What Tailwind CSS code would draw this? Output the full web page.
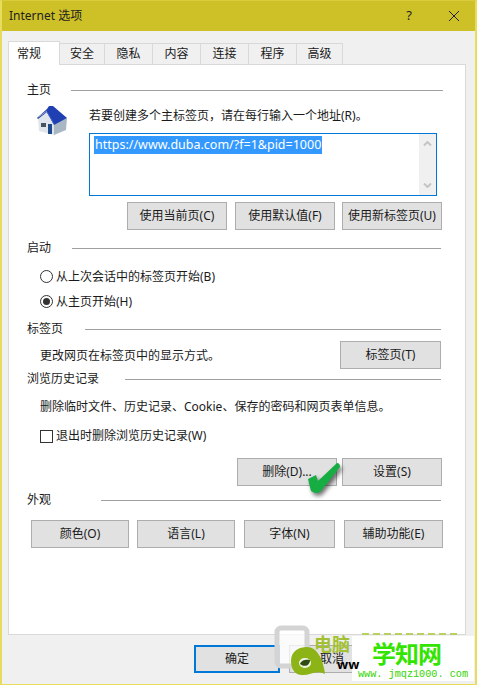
<!DOCTYPE html>
<html lang="zh">
<head>
<meta charset="utf-8">
<script src="https://cdn.jsdelivr.net/npm/@tailwindcss/browser@4"></script>
</head>
<body class="m-0">
<div class="relative w-[477px] h-[685px] overflow-hidden bg-[#f0f0f0] border-x-2 border-b border-[#e8dc5c] border-t border-t-[#d8cc3c] font-['Noto_Sans','Noto_Sans_CJK_SC',sans-serif] text-[12px] text-[#1a1a1a] flex flex-col">
  <div class="h-[30px] shrink-0 bg-[#cdc127] flex items-center pl-[7px] text-[12px] text-[#222]">
    <span class="flex-1">Internet 选项</span>
    <span class="w-[78px] text-center text-[13px]">?</span>
    <svg class="w-[12px] h-[12px] mr-[15px]" viewBox="0 0 12 12"><path d="M1 1L11 11M11 1L1 11" stroke="#222" stroke-width="1" fill="none"/></svg>
  </div>
  <div class="pl-[6px] pt-[9px] flex items-end h-[34px] shrink-0 relative z-10">
    <div class="w-[52px] h-[24px] bg-white border border-b-0 border-[#d9d9d9] flex items-center pl-[8px]">常规</div>
    <div class="w-[45px] h-[22px] border-y border-r border-[#d9d9d9] flex items-center justify-center">安全</div>
    <div class="w-[48px] h-[22px] border-y border-r border-[#d9d9d9] flex items-center justify-center">隐私</div>
    <div class="w-[48px] h-[22px] border-y border-r border-[#d9d9d9] flex items-center justify-center">内容</div>
    <div class="w-[48px] h-[22px] border-y border-r border-[#d9d9d9] flex items-center justify-center">连接</div>
    <div class="w-[48px] h-[22px] border-y border-r border-[#d9d9d9] flex items-center justify-center">程序</div>
    <div class="w-[46px] h-[22px] border-y border-r border-[#d9d9d9] flex items-center justify-center">高级</div>
  </div>
  <div class="ml-[6px] w-[458px] h-[571px] shrink-0 -mt-px bg-white border border-[#d9d9d9] pl-[18px] pr-[24px]">
    <div class="mt-[15px] h-[20px] flex items-center gap-[20px]"><span>主页</span><div class="flex-1 h-px bg-[#a0a0a0] mr-[-2px]"></div></div>
    <div class="flex h-[130px]">
      <div class="w-[62px] shrink-0 pl-[3px] pt-[1px]">
        <svg class="w-[45px] h-[40px]" viewBox="0 0 45 40">
          <path d="M8 17L17 10L24 22V34L9 30Z" fill="#dfe5ea"/>
          <path d="M24 23L37 17L36 29L24 34Z" fill="#a9b7c4"/>
          <path d="M7 17L17 8L19 5L23 5L37 17L24 24L17 11L8 18Z" fill="#1f3fb3"/>
          <path d="M17 11L24 23" stroke="#3f63d0" stroke-width="1" fill="none"/>
          <path d="M7 17L17 10" stroke="#8fa2b5" stroke-width="1" fill="none"/>
          <path d="M11 22H16V26H11Z" fill="#46525e"/>
          <path d="M18 23H22V33H18Z" fill="#1d4a8a"/>
        </svg>
      </div>
      <div class="flex flex-col">
        <div class="h-[20px] mt-[6px] flex items-center">若要创建多个主标签页，请在每行输入一个地址(R)。</div>
        <div class="mt-[7px] w-[348px] h-[63px] border border-[#0078d7] pl-[4px] pt-[2px] flex justify-between relative">
          <span class="h-[18px] bg-[#3399ff] text-white text-[12.5px] leading-[18px] px-px">https://www.duba.com/?f=1&amp;pid=1000</span>
          <div class="w-[17px] h-[61px] -mt-[2px] bg-[#f0f0f0] flex flex-col justify-between items-center py-[7px]">
            <svg class="w-[9px] h-[5px]" viewBox="0 0 9 5"><path d="M1 4.5L4.5 1L8 4.5" stroke="#c4c4c4" stroke-width="2" fill="none"/></svg>
            <svg class="w-[9px] h-[5px]" viewBox="0 0 9 5"><path d="M1 .5L4.5 4L8 .5" stroke="#c4c4c4" stroke-width="2" fill="none"/></svg>
          </div>
        </div>
        <div class="mt-[6px] flex h-[28px] pl-[38px]">
          <button class="w-[100px] h-[28px] shrink-0 bg-[#e1e1e1] border border-[#adadad]">使用当前页(C)</button>
          <button class="ml-[8px] w-[100px] h-[28px] shrink-0 bg-[#e1e1e1] border border-[#adadad]">使用默认值(F)</button>
          <button class="ml-[7px] w-[100px] h-[28px] shrink-0 bg-[#e1e1e1] border border-[#adadad]">使用新标签页(U)</button>
        </div>
      </div>
    </div>
    <div class="mt-[8px] h-[20px] flex items-center gap-[21px]"><span>启动</span><div class="flex-1 h-px bg-[#a0a0a0]"></div></div>
    <div class="mt-[6px] h-[25px] pl-[13px] flex items-center gap-[3px]">
      <span class="w-[13px] h-[13px] rounded-full border border-[#333] bg-white"></span><span>从上次会话中的标签页开始(B)</span>
    </div>
    <div class="h-[25px] pl-[13px] flex items-center gap-[3px]">
      <span class="w-[13px] h-[13px] rounded-full border border-[#333] bg-white flex items-center justify-center"><span class="w-[7px] h-[7px] rounded-full bg-[#333]"></span></span><span>从主页开始(H)</span>
    </div>
    <div class="mt-[5px] h-[20px] flex items-center gap-[22px]"><span>标签页</span><div class="flex-1 h-px bg-[#a0a0a0]"></div></div>
    <div class="mt-[2px] h-[28px] pl-[13px] flex items-center justify-between">
      <span class="pt-[2px]">更改网页在标签页中的显示方式。</span>
      <button class="w-[101px] h-[28px] bg-[#e1e1e1] border border-[#adadad]">标签页(T)</button>
    </div>
    <div class="h-[20px] flex items-center gap-[26px]"><span>浏览历史记录</span><div class="flex-1 h-px bg-[#a0a0a0]"></div></div>
    <div class="mt-[8px] h-[20px] pl-[13px] flex items-center">删除临时文件、历史记录、Cookie、保存的密码和网页表单信息。</div>
    <div class="mt-[9px] h-[20px] pl-[13px] flex items-center gap-[3px]">
      <span class="w-[13px] h-[13px] border border-[#333] bg-white"></span><span>退出时删除浏览历史记录(W)</span>
    </div>
    <div class="mt-[12px] h-[28px] flex justify-end gap-[5px] mr-[-1px]">
      <button class="w-[100px] h-[28px] bg-[#e1e1e1] border border-[#adadad]">删除(D)...</button>
      <button class="w-[100px] h-[28px] bg-[#e1e1e1] border border-[#adadad]">设置(S)</button>
    </div>
    <div class="mt-[4px] h-[20px] flex items-center gap-[50px]"><span>外观</span><div class="flex-1 h-px bg-[#a0a0a0]"></div></div>
    <div class="mt-[10px] h-[28px] pl-[4px] flex">
      <button class="w-[98px] h-[28px] shrink-0 bg-[#e1e1e1] border border-[#adadad]">颜色(O)</button>
      <button class="ml-[8px] w-[98px] h-[28px] shrink-0 bg-[#e1e1e1] border border-[#adadad]">语言(L)</button>
      <button class="ml-[9px] w-[91px] h-[28px] shrink-0 bg-[#e1e1e1] border border-[#adadad]">字体(N)</button>
      <button class="ml-[9px] w-[99px] h-[28px] shrink-0 bg-[#e1e1e1] border border-[#adadad]">辅助功能(E)</button>
    </div>
  </div>
  <div class="flex-1 pl-[192px] pt-[10px] flex gap-[9px]">
    <button class="w-[86px] h-[28px] bg-[#e1e1e1] border-2 border-[#0078d7]">确定</button>
    <button class="w-[86px] h-[28px] bg-[#e1e1e1] border border-[#adadad]">取消</button>
  </div>

  <!-- green check overlay -->
  <svg class="absolute left-[302px] top-[459px] w-[40px] h-[38px] drop-shadow-[2px_3px_2px_rgba(0,0,0,0.55)]" viewBox="0 0 40 38">
    <path d="M4 19L12 15L14 21L33 3Q36 3 36 7L17 31Q13 35 7 31Z" fill="#16ad43"/>
  </svg>

  <!-- watermark overlay -->
  <div class="absolute left-[312px] top-[632px] text-[18px] leading-[22px] font-bold text-[#a3c033] whitespace-nowrap">电脑</div>
  <div class="absolute left-[360px] top-[632px] w-[96px] h-[2px] bg-[repeating-linear-gradient(90deg,#b8d060_0_7px,transparent_7px_11px)]"></div>
  <svg class="absolute left-[272px] top-[624px] w-[60px] h-[52px]" viewBox="0 0 60 52">
    <rect x="3" y="3" width="30" height="38" rx="4" fill="#ffffff" fill-opacity="0.75" stroke="#d4d4d4" stroke-width="5"/>
    <path d="M17 36C17 26 25 22 33 22C43 22 49 34 51 49C42 44 35 51 28 50C21 50 17 44 17 36Z" fill="#8cb417"/>
    <ellipse cx="31" cy="38" rx="6" ry="5" fill="#f2f5e4"/>
    <path d="M26 39C27 35 32 34 36 35C36 40 31 43 26 39Z" fill="#2f4d12"/>
  </svg>
  <div class="absolute left-[350px] top-[635px] w-[122px] h-[45px] bg-white text-center">
    <div class="text-[24px] leading-[30px] font-bold text-[#33e400] mt-[3px] tracking-[-1px] pr-[13px]">学知网</div>
    <div class="text-[10.2px] leading-[12px] text-[#33d400] font-['Liberation_Mono',monospace] whitespace-nowrap">www. jmqz1000. com</div>
  </div>
  <div class="absolute left-[335px] top-[654px] text-[13px] font-bold text-black">ww</div>
</div>
</body>
</html>
